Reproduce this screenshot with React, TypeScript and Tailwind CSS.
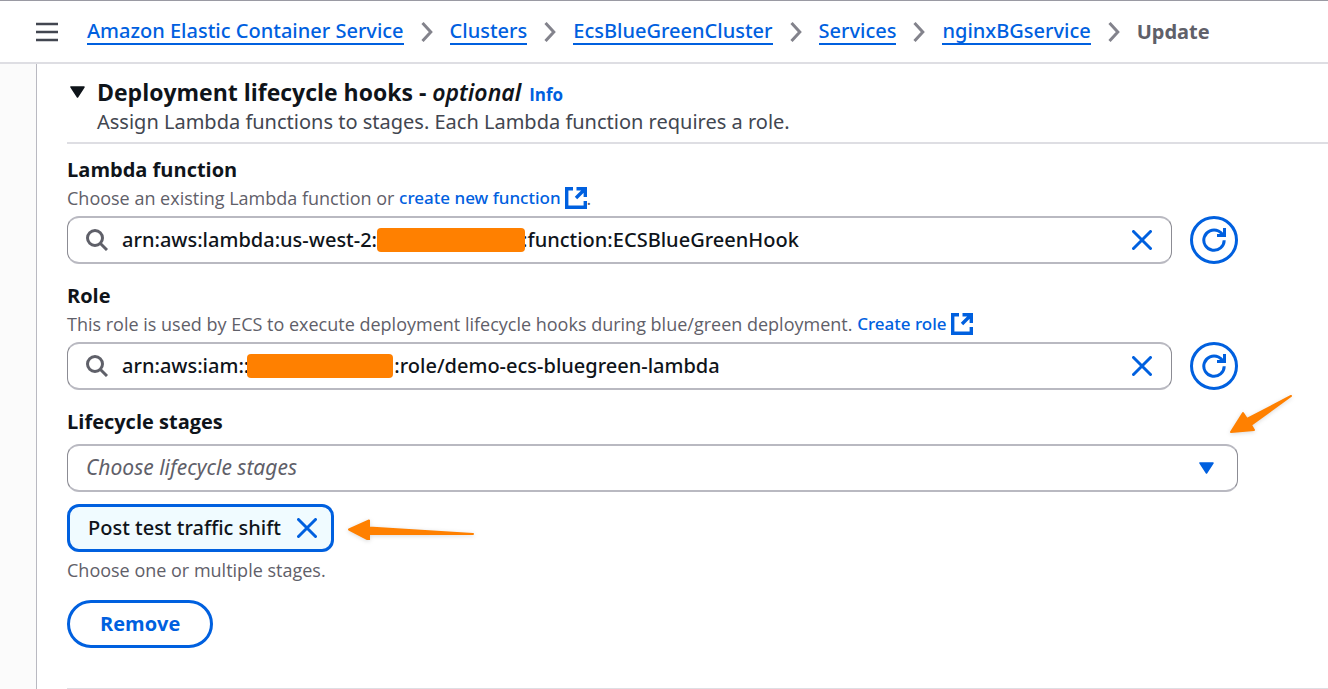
import { useState } from 'react';
import type { ReactNode } from 'react';

const crumbs = [
  'Amazon Elastic Container Service',
  'Clusters',
  'EcsBlueGreenCluster',
  'Services',
  'nginxBGservice',
];

// room for the masked account id
const MASKED = '\u2003'.repeat(7) + '\u2005';

function ChevronIcon() {
  return (
    <svg className="w-3 h-5 shrink-0" viewBox="0 0 12 20" fill="none" stroke="#83838c" strokeWidth="3" aria-hidden="true">
      <path d="M1.5 1l8.3 9-8.3 9" />
    </svg>
  );
}

function CloseIcon() {
  return (
    <svg className="w-5 h-5" viewBox="0 0 20 20" fill="none" stroke="#0060df" strokeWidth="3" strokeLinecap="round" aria-hidden="true">
      <path d="M1.5 1.5l17 17M18.5 1.5l-17 17" />
    </svg>
  );
}

function ExternalIcon() {
  return (
    <svg className="w-[22px] h-[22px]" viewBox="0 0 22 22" fill="none" stroke="currentColor" strokeWidth="3.4" aria-hidden="true">
      <path d="M8 1.7H1.7v18.6h18.6V14" />
      <path d="M11.5 1.7h8.8V10M20 2l-9 9" />
    </svg>
  );
}

function SearchIcon() {
  return (
    <svg className="w-[22px] h-[22px] shrink-0" viewBox="0 0 22 22" fill="none" stroke="#5f6069" strokeWidth="3" aria-hidden="true">
      <circle cx="9" cy="9" r="7.5" />
      <path d="M14.2 14.2l6.8 6.8" />
    </svg>
  );
}

function RefreshIcon() {
  return (
    <svg className="w-6 h-6" viewBox="0 0 24 24" fill="none" stroke="#0060df" strokeWidth="3" aria-hidden="true">
      <path d="M22.2 12.2A10.2 10.2 0 1 1 16.5 3Q19 4.3 21 7" />
      <path d="M22.5 0v7.5H15" />
    </svg>
  );
}

interface ResourceFieldProps {
  id: string;
  label: string;
  hint: ReactNode;
  initial: string;
  mask: ReactNode;
}

function ResourceField({ id, label, hint, initial, mask }: ResourceFieldProps) {
  const [value, setValue] = useState(initial);

  return (
    <div>
      <label htmlFor={id} className="block text-[20px] leading-7 font-bold">{label}</label>
      <div className="flex items-center text-[18px] leading-7 text-[#5f6069]">{hint}</div>
      <div className="mt-1 flex items-center gap-[18px]">
        <div className="relative flex flex-1 items-center gap-3.5 h-12 pl-[18px] pr-[19px] rounded-xl border-x border-y-2 border-x-[#8c8c94] border-y-[#b9b9c1]">
          <SearchIcon />
          <input
            id={id}
            type="text"
            value={value}
            onChange={e => setValue(e.target.value)}
            className="flex-1 min-w-0 bg-transparent font-['Noto_Sans',sans-serif] font-medium text-[20px] leading-7 outline-none"
          />
          {value === initial && mask}
          <button type="button" aria-label={`Clear ${label}`} onClick={() => setValue('')}>
            <CloseIcon />
          </button>
        </div>
        <button
          type="button"
          aria-label={`Refresh ${label}`}
          className="flex items-center justify-center w-12 h-12 rounded-full border-3 border-[#0060df]"
        >
          <RefreshIcon />
        </button>
      </div>
    </div>
  );
}

function Header() {
  return (
    <header className="flex items-center h-16 pl-9 gap-[29px] bg-white border-t border-t-[#9a9aa3] border-b-2 border-b-[#dedee3]">
      <button type="button" aria-label="Open navigation">
        <svg className="w-[22px] h-5" viewBox="0 0 22 20" stroke="#424650" strokeWidth="2.6" aria-hidden="true">
          <path d="M0 2h22M0 10h22M0 18h22" />
        </svg>
      </button>
      <nav aria-label="Breadcrumbs">
        <ol className="flex items-center gap-[17px] font-['Noto_Sans',sans-serif] text-[20px] leading-6 whitespace-nowrap">
          {crumbs.map(crumb => (
            <li key={crumb} className="flex items-center gap-[17px]">
              <a href="#" className="font-medium text-[#0060df] border-b-2 border-[#0060df]">{crumb}</a>
              <ChevronIcon />
            </li>
          ))}
          <li className="font-bold text-[#5f6069]">Update</li>
        </ol>
      </nav>
    </header>
  );
}

export default function App() {
  const [selected, setSelected] = useState(true);

  return (
    <div className="min-h-screen flex flex-col bg-white text-[#0f141a] font-['Open_Sans','Noto_Sans',sans-serif]">
      <Header />
      <div className="flex flex-1">
        <aside className="w-[37px] shrink-0 bg-[#fbfbfb] border-r border-[#b9b9c1]" />
        <main className="flex-1 min-w-0 pl-[30px] pt-3.5">
          <div className="flex gap-3 pb-1.5 border-b-2 border-[#dedee3]">
            <button type="button" aria-label="Toggle lifecycle hooks" className="self-start pt-2 pl-[3px]">
              <svg className="w-[15px] h-3" viewBox="0 0 15 12" aria-hidden="true">
                <path d="M1 1h13L7.5 11z" fill="#0f141a" stroke="#0f141a" strokeWidth="1.5" strokeLinejoin="round" />
              </svg>
            </button>
            <div>
              <div className="flex items-baseline gap-2">
                <h2 className="text-[23px] leading-7 font-bold">
                  Deployment lifecycle hooks - <i className="font-['Noto_Sans',sans-serif] font-semibold">optional</i>
                </h2>
                <a href="#" className="text-[17px] font-bold text-[#0060df]">Info</a>
              </div>
              <p className="font-['Noto_Sans',sans-serif] text-[20px] leading-7 text-[#424650]">
                Assign Lambda functions to stages. Each Lambda function requires a role.
              </p>
            </div>
          </div>

          <form className="flex flex-col gap-[18px] pt-3 pr-[90px]" onSubmit={e => e.preventDefault()}>
            <ResourceField
              id="lambda"
              label="Lambda function"
              initial={`arn:aws:lambda:us-west-2:${MASKED}:function:ECSBlueGreenHook`}
              hint={
                <>
                  <span>Choose an existing Lambda function or&nbsp;</span>
                  <a href="#" className="flex items-center gap-1 font-['Noto_Sans',sans-serif] text-[17px] font-medium text-[#0060df]">
                    create new function
                    <ExternalIcon />
                  </a>
                  <span>.</span>
                </>
              }
              mask={<span className="absolute left-[309px] w-[148px] h-6 rounded bg-[#ff8000]" />}
            />
            <ResourceField
              id="role"
              label="Role"
              initial={`arn:aws:iam::${MASKED}:role/demo-ecs-bluegreen-lambda`}
              hint={
                <>
                  <span>This role is used by ECS to execute deployment lifecycle hooks during blue/green deployment.&nbsp;</span>
                  <a href="#" className="flex items-center gap-1 font-['Noto_Sans',sans-serif] text-[17px] font-medium text-[#0060df]">
                    Create role
                    <ExternalIcon />
                  </a>
                </>
              }
              mask={<span className="absolute left-[179px] w-[146px] h-6 rounded bg-[#ff8000]" />}
            />

            <div className="relative">
              <label htmlFor="stages" className="block text-[20px] leading-7 font-bold">Lifecycle stages</label>
              <div className="relative mt-2">
                <select
                  id="stages"
                  defaultValue=""
                  className="block w-full h-12 px-[18px] rounded-xl border-x border-y-2 border-x-[#8c8c94] border-y-[#b9b9c1] appearance-none bg-transparent font-['Noto_Sans',sans-serif] text-[21px] italic text-[#5f6069]"
                >
                  <option value="">Choose lifecycle stages</option>
                </select>
                <svg className="absolute right-6 top-[18px] w-[15px] h-3 pointer-events-none" viewBox="0 0 15 12" aria-hidden="true">
                  <path d="M1 1h13L7.5 11z" fill="#0060df" stroke="#0060df" strokeWidth="1.5" strokeLinejoin="round" />
                </svg>
              </div>
              <svg className="absolute -top-4 -right-14 w-[66px] h-12 pointer-events-none drop-shadow-sm" viewBox="0 0 66 48" fill="#ff8000" stroke="#ff8000" strokeWidth="2" strokeLinejoin="round" aria-hidden="true">
                <path d="M3 40L15 21l4 6L63 4 23 33l3 5z" />
              </svg>

              {selected && (
                <div className="mt-3 flex items-center gap-3.5">
                  <div className="flex items-center gap-4 h-12 pl-[18px] pr-3.5 rounded-xl border-3 border-[#0060df] bg-[#f0fbff] font-['Noto_Sans',sans-serif] font-medium text-[20px] leading-7">
                    Post test traffic shift
                    <button type="button" aria-label="Remove Post test traffic shift" onClick={() => setSelected(false)}>
                      <CloseIcon />
                    </button>
                  </div>
                  <svg className="w-32 h-6 drop-shadow-sm" viewBox="0 0 128 24" fill="#ff8000" stroke="#ff8000" strokeWidth="2" strokeLinejoin="round" aria-hidden="true">
                    <path d="M1 13.5L21 4.500v7l104 6.500-104 0v6z" />
                  </svg>
                </div>
              )}
              <p className="mt-1 text-[18px] leading-7 text-[#5f6069]">Choose one or multiple stages.</p>
              <button
                type="button"
                className="mt-4 h-12 px-[30px] rounded-full border-3 border-[#0060df] text-[20px] leading-7 font-bold text-[#0060df]"
              >
                Remove
              </button>
            </div>
          </form>
          <hr className="mt-10 border-[#dedee3]" />
        </main>
      </div>
    </div>
  );
}
